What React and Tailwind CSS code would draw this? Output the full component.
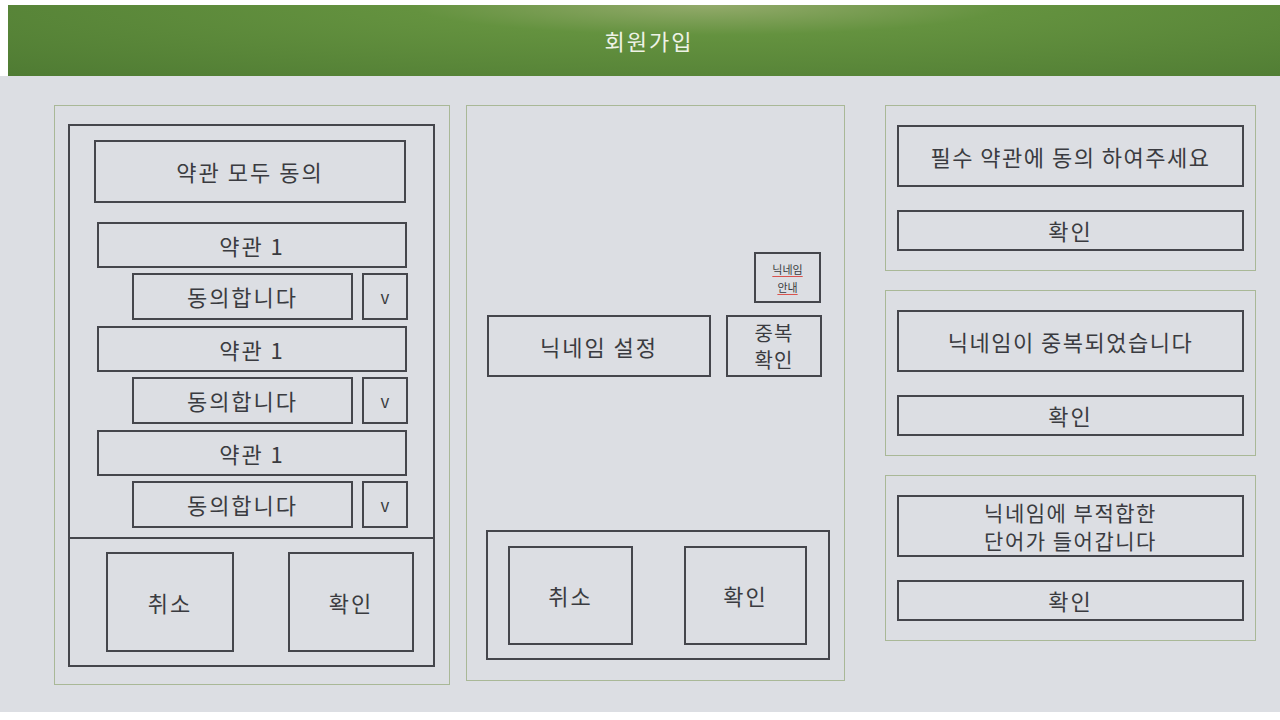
const font = "font-['Noto_Sans_CJK_KR','Noto_Sans',sans-serif]"

function Box({ className = '', children }) {
    return (
        <div className={`flex items-center justify-center border-2 border-[#45464c] text-[#3a3b40] ${className}`}>
            {children}
        </div>
    )
}

function TermRow() {
    return (
        <>
            <Box className="h-[46px] w-[310px] ml-[27px] text-[22px] tracking-[2px]">약관 1</Box>
            <div className="flex gap-[9px] ml-[62px] mt-[5px]">
                <Box className="h-[47px] w-[221px] text-[22px] tracking-[2px]">동의합니다</Box>
                <Box className="h-[47px] w-[46px] text-[17px]">v</Box>
            </div>
        </>
    )
}

function Alert({ children, h = 'h-[62px]', text = 'text-[22px]' }) {
    return (
        <div className="border border-[#a9b897] px-[11px] pt-[19px] pb-[19px] flex flex-col">
            <Box className={`${h} ${text} leading-[28px] tracking-[1.5px] text-center`}>{children}</Box>
            <Box className="h-[41px] mt-[23px] text-[22px] tracking-[2px]">확인</Box>
        </div>
    )
}

export default function App() {
    return (
        <div className={`w-[1280px] h-[720px] bg-white flex flex-col ${font}`}>
            <div className="h-[5px]" />
            <div className="h-[71px] ml-[8px] flex items-center justify-center bg-[radial-gradient(ellipse_at_55%_0%,#93aa6b_0%,#64923f_30%,#4f7b33_100%)]">
                <span className="text-[22px] tracking-[2px] text-[#eef2e6] ml-[10px]">회원가입</span>
            </div>
            <div className="h-[636px] bg-[#dcdee3] flex pt-[29px] pl-[54px]">
                {/* left: terms */}
                <div className="w-[396px] h-[580px] border border-[#a9b897] pt-[18px] pl-[13px] pr-[14px] pb-[17px]">
                    <div className="h-full border-2 border-[#45464c] flex flex-col">
                        <div className="h-[411px] pt-[14px]">
                            <Box className="h-[63px] w-[312px] ml-[24px] text-[22px] tracking-[2px]">약관 모두 동의</Box>
                            <div className="mt-[19px]">
                                <TermRow />
                            </div>
                            <div className="mt-[6px]">
                                <TermRow />
                            </div>
                            <div className="mt-[6px]">
                                <TermRow />
                            </div>
                        </div>
                        <div className="flex-1 border-t-2 border-[#45464c] flex items-center justify-between pl-[36px] pr-[19px]">
                            <Box className="h-[100px] w-[128px] text-[22px] tracking-[2px]">취소</Box>
                            <Box className="h-[100px] w-[126px] text-[22px] tracking-[2px]">확인</Box>
                        </div>
                    </div>
                </div>

                {/* middle: nickname */}
                <div className="w-[379px] h-[576px] ml-[16px] border border-[#a9b897] flex flex-col pl-[20px] pr-[16px]">
                    <div className="h-[146px]" />
                    <div className="flex justify-end pr-[7px]">
                        <div className="h-[51px] w-[67px] border-2 border-[#45464c] flex flex-col items-center justify-center text-[11px] leading-[18px] text-[#3a3b40]">
                            <span className="underline decoration-[#d9534f] underline-offset-2">닉네임</span>
                            <span className="underline decoration-[#d9534f] underline-offset-2">안내</span>
                        </div>
                    </div>
                    <div className="flex mt-[12px] gap-[15px]">
                        <Box className="h-[62px] w-[224px] text-[22px] tracking-[2px]">닉네임 설정</Box>
                        <Box className="h-[62px] w-[96px] text-[20px] leading-[27px] tracking-[1px] text-center">중복<br />확인</Box>
                    </div>
                    <div className="h-[153px]" />
                    <div className="h-[130px] w-[344px] -ml-[1px] border-2 border-[#45464c] flex items-center justify-between pl-[20px] pr-[21px]">
                        <Box className="h-[99px] w-[125px] text-[22px] tracking-[2px]">취소</Box>
                        <Box className="h-[99px] w-[123px] text-[22px] tracking-[2px]">확인</Box>
                    </div>
                </div>

                {/* right: alerts */}
                <div className="w-[371px] ml-[40px] flex flex-col gap-[19px]">
                    <Alert>필수 약관에 동의 하여주세요</Alert>
                    <Alert>닉네임이 중복되었습니다</Alert>
                    <Alert h="h-[62px]" text="text-[21px]">닉네임에 부적합한<br />단어가 들어갑니다</Alert>
                </div>
            </div>
        </div>
    )
}
